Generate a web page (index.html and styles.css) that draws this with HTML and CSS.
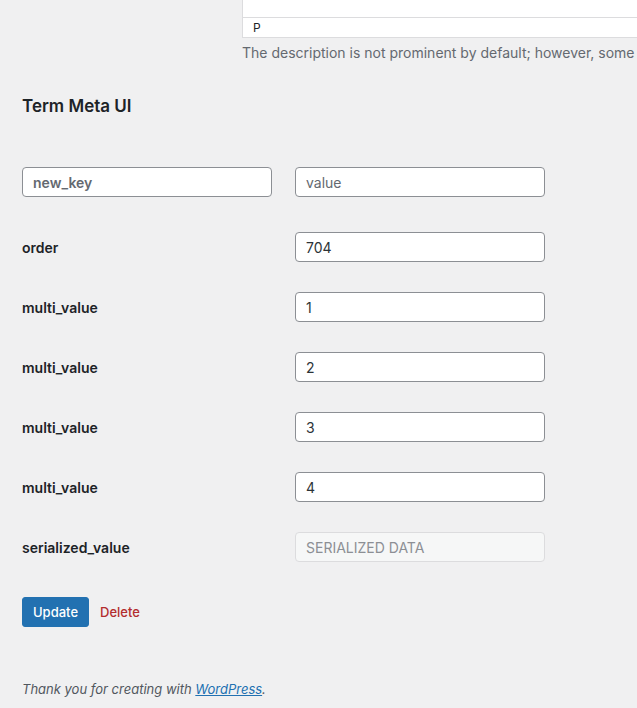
FILE: index.html
```html
<!DOCTYPE html>
<html lang="en">
<head>
<meta charset="utf-8">
<title>Term Meta UI</title>
<link rel="stylesheet" href="styles.css">
</head>
<body>
<div class="page">
  <div class="editor-wrap">
    <div class="editor">
      <div class="editor-body"></div>
      <div class="editor-path">p</div>
    </div>
    <p class="description">The description is not prominent by default; however, some themes may show it.</p>
  </div>

  <h2 class="section-title">Term Meta UI</h2>

  <div class="meta-grid">
    <div class="row row-new">
      <input class="field field-key" type="text" placeholder="new_key">
      <input class="field" type="text" placeholder="value">
    </div>
    <div class="row">
      <label class="meta-label">order</label>
      <input class="field" type="text" value="704">
    </div>
    <div class="row">
      <label class="meta-label">multi_value</label>
      <input class="field" type="text" value="1">
    </div>
    <div class="row">
      <label class="meta-label">multi_value</label>
      <input class="field" type="text" value="2">
    </div>
    <div class="row">
      <label class="meta-label">multi_value</label>
      <input class="field" type="text" value="3">
    </div>
    <div class="row">
      <label class="meta-label">multi_value</label>
      <input class="field" type="text" value="4">
    </div>
    <div class="row">
      <label class="meta-label">serialized_value</label>
      <input class="field" type="text" value="SERIALIZED DATA" disabled>
    </div>
  </div>

  <div class="actions">
    <button class="button-primary" type="button">Update</button>
    <a class="delete-link" href="#">Delete</a>
  </div>

  <p class="footer">Thank you for creating with <a href="#">WordPress</a>.</p>
</div>
</body>
</html>
```

FILE: styles.css
```css
html, body {
  margin: 0;
  padding: 0;
  background: #f0f0f1;
  overflow: hidden;
}

body {
  font-family: Inter, "Liberation Sans", Arial, sans-serif;
  font-size: 13px;
  color: #3c434a;
  width: 637px;
  height: 708px;
}

.page {
  padding-left: 22px;
}

.editor-wrap {
  margin-left: 220px;
  white-space: nowrap;
  overflow: hidden;
}

.editor {
  background: #fff;
  border: 1px solid #dcdcde;
  border-top: none;
  border-right: none;
}

.editor-body {
  height: 17px;
}

.editor-path {
  border-top: 1px solid #dcdcde;
  height: 19px;
  line-height: 19px;
  padding-left: 10px;
  font-size: 12px;
  color: #1d2327;
  text-transform: uppercase;
}

.description {
  margin: 5px 0 0;
  line-height: 19px;
  color: #646970;
  font-size: 14px;
}

.section-title {
  margin: 32px 0 0;
  font-size: 17px;
  line-height: 24px;
  font-weight: 600;
  color: #1d2327;
}

.meta-grid {
  margin-top: 49px;
  display: flex;
  flex-direction: column;
  gap: 30px;
}

.row {
  display: grid;
  grid-template-columns: 250px 250px;
  column-gap: 23px;
  align-items: center;
  height: 30px;
}

.row-new {
  margin-bottom: 5px;
}

.meta-label {
  font-size: 14px;
  font-weight: 600;
  color: #1d2327;
}

.field {
  box-sizing: border-box;
  width: 250px;
  height: 30px;
  margin: 0;
  padding: 0 10px;
  border: 1px solid #8c8f94;
  border-radius: 4px;
  background: #fff;
  font-family: inherit;
  font-size: 14px;
  color: #2c3338;
  outline: none;
}

.field::placeholder {
  color: #646970;
  opacity: 1;
}

.field-key::placeholder {
  font-weight: 600;
}

.field:disabled {
  background: #f6f7f7;
  border-color: #dcdcde;
  color: #8c8f94;
}

.actions {
  margin-top: 35px;
  display: flex;
  align-items: center;
  gap: 11px;
}

.button-primary {
  box-sizing: border-box;
  height: 30px;
  padding: 0 10px;
  border: 1px solid #2271b1;
  border-radius: 3px;
  background: #2271b1;
  color: #fff;
  font-family: inherit;
  font-size: 13px;
  font-weight: 500;
  line-height: 28px;
}

.delete-link {
  color: #b32d2e;
  text-decoration: none;
  font-size: 13px;
  font-weight: 500;
}

.footer {
  margin: 53px 0 0;
  font-style: italic;
  font-size: 13px;
  line-height: 19px;
  color: #50575e;
}

.footer a {
  color: #2271b1;
  text-decoration: underline;
}
```
